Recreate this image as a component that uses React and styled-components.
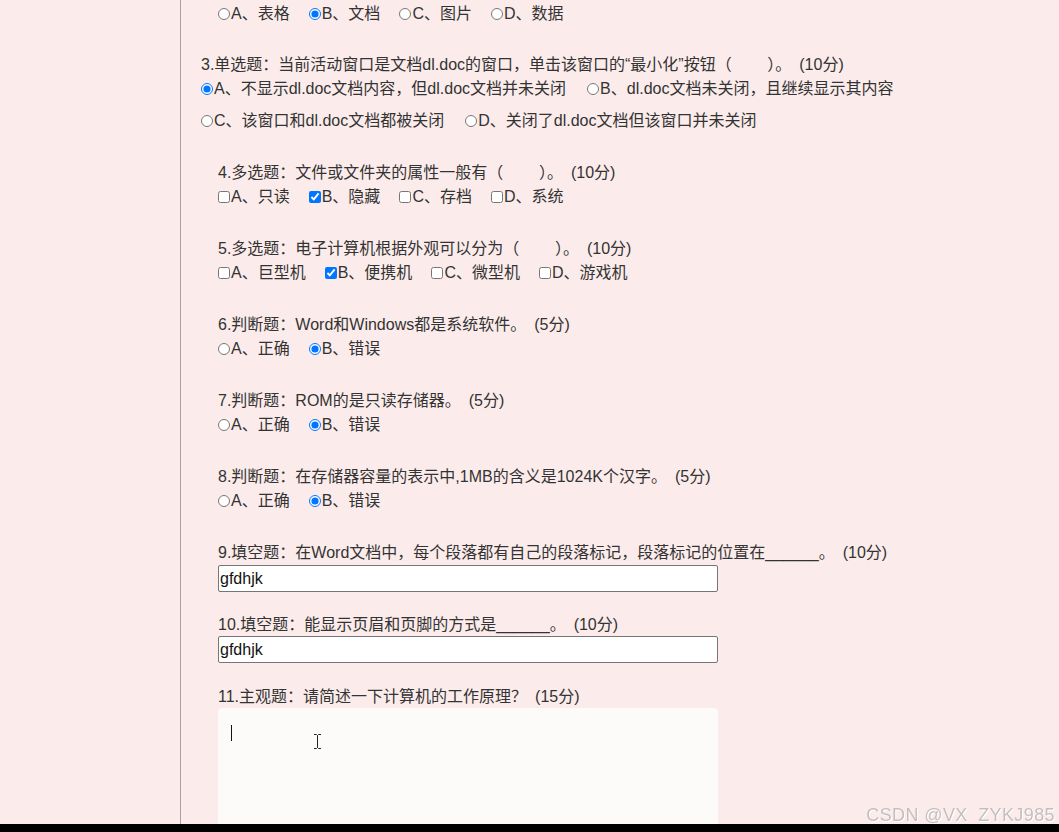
import React from 'react'
import styled, { createGlobalStyle } from 'styled-components'

const GlobalStyle = createGlobalStyle`
  html, body {
    margin: 0;
    padding: 0;
    background: #fbeceb;
    overflow: hidden;
  }
  body {
    font-family: "Liberation Sans", "Noto Sans CJK SC", sans-serif;
    color: #333;
    font-size: 16px;
  }
`

const Page = styled.div`
  display: flex;
  min-height: 832px;
`

const Gutter = styled.div`
  width: 180px;
  flex-shrink: 0;
`

const Main = styled.main`
  border-left: 1px solid #a3a3a3;
  padding: 2px 0 0 20px;
  flex: 1;
  min-height: 832px;
`

const Question = styled.section`
  padding-left: ${p => (p.flush ? '0' : '17px')};
  margin-bottom: ${p => p.gap || 28}px;
`

const Title = styled.div`
  height: 24px;
  line-height: 24px;
  white-space: nowrap;
`

const Score = styled.span`
  margin-left: 8px;
`

const Options = styled.div`
  display: flex;
  align-items: center;
  height: 24px;
  margin-top: ${p => p.top || 0}px;
  white-space: nowrap;
`

const Option = styled.label`
  display: inline-flex;
  align-items: center;
  margin-right: ${p => p.space || 19}px;
  line-height: 24px;
`

const Radio = styled.input.attrs({ type: 'radio' })`
  width: 12px;
  height: 12px;
  margin: 0 1px 0 0;
  accent-color: #0075ff;
`

const Check = styled.input.attrs({ type: 'checkbox' })`
  width: 12px;
  height: 12px;
  margin: 0 1px 0 0;
  accent-color: #0075ff;
`

const TextInput = styled.input`
  display: block;
  box-sizing: border-box;
  width: 500px;
  height: 27px;
  margin-top: ${p => p.top || 0}px;
  padding: 0 1px;
  border: 1px solid #767676;
  border-radius: 2px;
  background: #fff;
  font-family: "Liberation Sans", "Noto Sans CJK SC", sans-serif;
  font-size: 16px;
  color: #111;
  outline: none;
`

const AreaWrap = styled.div`
  position: relative;
  width: 500px;
  margin-top: -1px;
`

const Area = styled.textarea`
  display: block;
  box-sizing: border-box;
  width: 500px;
  height: 160px;
  border: none;
  border-radius: 4px;
  background: #fdfbfa;
  resize: none;
  outline: none;
`

const Caret = styled.span`
  position: absolute;
  left: 13px;
  top: 17px;
  width: 1px;
  height: 16px;
  background: #111;
`

const Pointer = styled.svg`
  position: absolute;
  left: 95px;
  top: 26px;
`

const Watermark = styled.div`
  position: fixed;
  right: 4px;
  bottom: 6px;
  font-family: "Liberation Sans", sans-serif;
  font-size: 18px;
  letter-spacing: 0.4px;
  color: #c4bfbe;
  text-shadow: 1px 1px 0 #fff;
`

const Taskbar = styled.div`
  position: fixed;
  left: 0;
  right: 0;
  bottom: 0;
  height: 8px;
  background: #000;
`

const sp = n => '\u00a0'.repeat(n)

function Choice({ kind, checked, children, space }) {
  const Box = kind === 'check' ? Check : Radio
  return (
    <Option space={space}>
      <Box defaultChecked={checked} />
      {children}
    </Option>
  )
}

export default function App() {
  return (
    <>
      <GlobalStyle />
      <Page>
        <Gutter />
        <Main>
          <Question gap={27}>
            <Options>
              <Choice>A、表格</Choice>
              <Choice checked>B、文档</Choice>
              <Choice>C、图片</Choice>
              <Choice>D、数据</Choice>
            </Options>
          </Question>

          <Question flush>
            <Title>3.单选题：当前活动窗口是文档dl.doc的窗口，单击该窗口的“最小化”按钮（{sp(8)}）。<Score>(10分)</Score></Title>
            <Options>
              <Choice checked space={21}>A、不显示dl.doc文档内容，但dl.doc文档并未关闭</Choice>
              <Choice>B、dl.doc文档未关闭，且继续显示其内容</Choice>
            </Options>
            <Options top={8}>
              <Choice space={21}>C、该窗口和dl.doc文档都被关闭</Choice>
              <Choice>D、关闭了dl.doc文档但该窗口并未关闭</Choice>
            </Options>
          </Question>

          <Question>
            <Title>4.多选题：文件或文件夹的属性一般有（{sp(8)}）。<Score>(10分)</Score></Title>
            <Options>
              <Choice kind="check">A、只读</Choice>
              <Choice kind="check" checked>B、隐藏</Choice>
              <Choice kind="check">C、存档</Choice>
              <Choice kind="check">D、系统</Choice>
            </Options>
          </Question>

          <Question>
            <Title>5.多选题：电子计算机根据外观可以分为（{sp(8)}）。<Score>(10分)</Score></Title>
            <Options>
              <Choice kind="check">A、巨型机</Choice>
              <Choice kind="check" checked>B、便携机</Choice>
              <Choice kind="check">C、微型机</Choice>
              <Choice kind="check">D、游戏机</Choice>
            </Options>
          </Question>

          <Question>
            <Title>6.判断题：Word和Windows都是系统软件。<Score>(5分)</Score></Title>
            <Options>
              <Choice>A、正确</Choice>
              <Choice checked>B、错误</Choice>
            </Options>
          </Question>

          <Question>
            <Title>7.判断题：ROM的是只读存储器。<Score>(5分)</Score></Title>
            <Options>
              <Choice>A、正确</Choice>
              <Choice checked>B、错误</Choice>
            </Options>
          </Question>

          <Question>
            <Title>8.判断题：在存储器容量的表示中,1MB的含义是1024K个汉字。<Score>(5分)</Score></Title>
            <Options>
              <Choice>A、正确</Choice>
              <Choice checked>B、错误</Choice>
            </Options>
          </Question>

          <Question gap={21}>
            <Title>9.填空题：在Word文档中，每个段落都有自己的段落标记，段落标记的位置在______。<Score>(10分)</Score></Title>
            <TextInput defaultValue="gfdhjk" />
          </Question>

          <Question gap={22}>
            <Title>10.填空题：能显示页眉和页脚的方式是______。<Score>(10分)</Score></Title>
            <TextInput top={-1} defaultValue="gfdhjk" />
          </Question>

          <Question>
            <Title>11.主观题：请简述一下计算机的工作原理？<Score>(15分)</Score></Title>
            <AreaWrap>
              <Area />
              <Caret />
              <Pointer width="9" height="15" viewBox="0 0 9 15">
                <path d="M1 0.5h2.5l1 1 1-1H8M4.5 1.5v12M1 14.5h2.5l1-1 1 1H8" fill="none" stroke="#222" strokeWidth="1" />
              </Pointer>
            </AreaWrap>
          </Question>
        </Main>
      </Page>
      <Watermark>CSDN @VX_ZYKJ985</Watermark>
      <Taskbar />
    </>
  )
}
